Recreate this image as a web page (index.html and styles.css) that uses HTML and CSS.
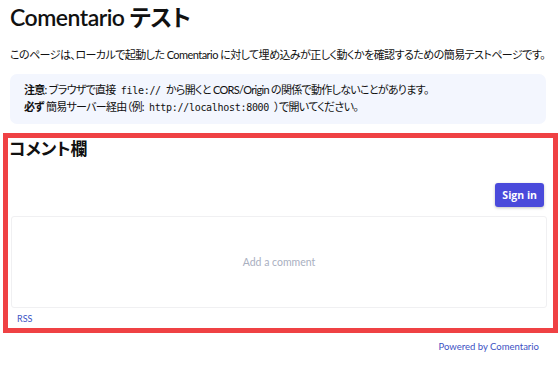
FILE: index.html
```html
<!doctype html>
<html lang="ja">
  <head>
    <meta charset="utf-8">
    <title>Comentario テスト</title>
    <link rel="stylesheet" href="styles.css">
  </head>
  <body>
    <main class="page">
      <h1 class="title">Comentario テスト</h1>
      <p class="lead">このページは、ローカルで起動した Comentario に対して埋め込みが正しく動くかを確認するための簡易テストページです。</p>

      <div class="notice">
        <div><strong>注意</strong>: ブラウザで直接 <code>file://</code> から開くと CORS/Origin の関係で動作しないことがあります。</div>
        <div><strong>必ず</strong> 簡易サーバー経由（例: <code>http://localhost:8000</code> ）で開いてください。</div>
      </div>

      <section class="comments">
        <h2 class="comments-title">コメント欄</h2>
        <div class="toolbar">
          <button class="btn-signin">Sign in</button>
        </div>
        <div class="editor">
          <span class="placeholder">Add a comment</span>
        </div>
        <div class="comments-footer">
          <a href="#" class="rss">RSS</a>
        </div>
      </section>

      <div class="powered">
        <a href="#">Powered by Comentario</a>
      </div>
    </main>
  </body>
</html>
```

FILE: styles.css
```css
body {
    margin: 0;
    font-family: "Lato", "Noto Sans CJK JP", sans-serif;
    font-feature-settings: "palt";
    color: #111;
    background: #fff;
}

.page {
    width: 536px;
    margin-left: 10px;
}

.title {
    margin: 0;
    padding-top: 2px;
    font-size: 23px;
    font-weight: 600;
    line-height: 30px;
    letter-spacing: -0.5px;
}

.lead {
    margin: 14px 0 0;
    font-size: 11px;
    line-height: 18px;
    letter-spacing: -0.55px;
    white-space: nowrap;
}

.notice {
    margin-top: 10px;
    padding: 8px 14px;
    background: #f3f6fe;
    border-radius: 7px;
    font-size: 11px;
    line-height: 16px;
    letter-spacing: -0.7px;
    white-space: nowrap;
}

.notice strong {
    font-weight: 700;
}

.notice code {
    font-family: "DejaVu Sans Mono", monospace;
    font-size: 10px;
    letter-spacing: -0.3px;
    padding: 0 3px;
}

.comments {
    box-sizing: border-box;
    margin: 9px -12px 0 -7px;
    height: 200px;
    padding: 0 6px 0 1px;
    border: 5px solid #ef4144;
    display: flex;
    flex-direction: column;
}

.comments-title {
    margin: 0;
    font-size: 17px;
    font-weight: 700;
    line-height: 22px;
}

.toolbar {
    display: flex;
    justify-content: flex-end;
    padding: 17px 3px 0 0;
    height: 41px;
    box-sizing: border-box;
    margin-top: 6px;
}

.btn-signin {
    height: 24px;
    padding: 0 7px;
    border: 0;
    border-radius: 3px;
    background: #4a4adb;
    color: #fff;
    font-family: "Open Sans", sans-serif;
    font-weight: 700;
    font-size: 10.5px;
    box-shadow: 0 1px 3px rgba(0, 0, 0, 0.25);
}

.editor {
    margin-top: 9px;
    margin-left: 2px;
    height: 90px;
    border: 1px solid #f0f0f2;
    border-radius: 3px;
    display: flex;
    align-items: center;
    justify-content: center;
}

.placeholder {
    color: #a9afbf;
    font-size: 10.5px;
}

.comments-footer {
    padding: 1px 0 0 8px;
    line-height: 13px;
}

.rss {
    font-size: 9px;
    color: #3d52c4;
    text-decoration: none;
}

.powered {
    text-align: right;
    padding: 1px 7px 0 0;
}

.powered a {
    font-size: 9.5px;
    color: #3d52c4;
    text-decoration: none;
}
```
